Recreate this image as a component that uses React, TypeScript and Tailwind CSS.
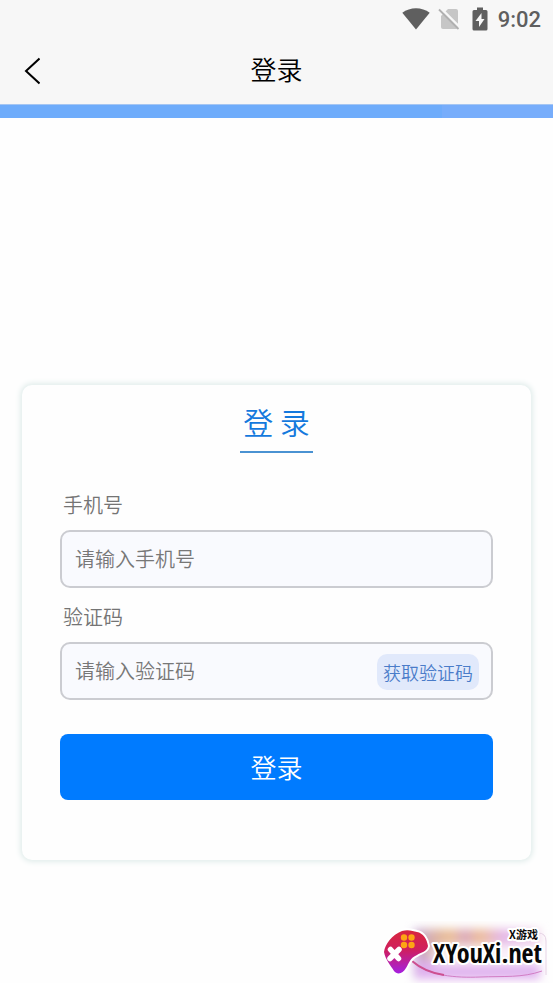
function StatusBar() {
  return (
    <div className="flex h-[38px] items-center justify-end pr-3 text-[#5f5f5f]">
      <svg className="h-[22px] w-7" viewBox="0 0 28 22" fill="currentColor">
        <path d="M14 21.5 L0.3 4.8 C8 -1.4 20 -1.4 27.7 4.8 Z" />
      </svg>
      <svg className="ml-2 h-[22px] w-[22px]" viewBox="0 0 22 22">
        <path d="M3 8 L10 1 H18 Q20 1 20 3 V19 Q20 21 18 21 H5 Q3 21 3 19 Z" fill="#c6c6c6" />
        <path d="M2 -0.5 L23.5 21" stroke="#f7f7f7" strokeWidth="2.5" />
        <path d="M1 1.5 L20.5 21" stroke="#b0b0b0" strokeWidth="1.8" />
      </svg>
      <svg className="ml-3 h-6 w-4" viewBox="0 0 16 24">
        <path
          d="M5 0.5 H11 V3 H14 Q15.5 3 15.5 4.5 V22 Q15.5 23.5 14 23.5 H2 Q0.5 23.5 0.5 22 V4.5 Q0.5 3 2 3 H5 Z"
          fill="currentColor"
        />
        <path d="M9.5 6 L3.5 14 H7 V20 L12.5 12 H9.5 Z" fill="#f7f7f7" />
      </svg>
      <span className="ml-[10px] pt-[2px] font-[Roboto] text-[22px] leading-6 font-medium">9:02</span>
    </div>
  )
}

function SiteBadge() {
  return (
    <div className="relative h-[62px] w-[173px]">
      <svg className="absolute inset-0 h-full w-full" viewBox="0 0 173 62">
        <defs>
          <filter id="soft" x="-20%" y="-40%" width="140%" height="180%">
            <feGaussianBlur stdDeviation="5" />
          </filter>
          <linearGradient id="haze" x1="0" y1="0" x2="1" y2="0">
            <stop offset="0" stopColor="#c3a6d8" />
            <stop offset="0.2" stopColor="#e0b49c" />
            <stop offset="0.3" stopColor="#ecc096" />
            <stop offset="0.4" stopColor="#d9a7c0" />
            <stop offset="0.52" stopColor="#edbd96" />
            <stop offset="0.7" stopColor="#e4b6e8" />
            <stop offset="1" stopColor="#f1d4ea" />
          </linearGradient>
          <linearGradient id="pad" x1="0" y1="0" x2="0" y2="1">
            <stop offset="0" stopColor="#d8273d" />
            <stop offset="0.45" stopColor="#cf1f5e" />
            <stop offset="1" stopColor="#a51fe0" />
          </linearGradient>
        </defs>
        <g filter="url(#soft)">
          <rect x="34" y="8" width="126" height="50" fill="url(#haze)" />
          <rect x="36" y="40" width="124" height="18" fill="#dfb0ee" />
          <rect x="52" y="24" width="112" height="20" rx="10" fill="#fff" fillOpacity="0.8" />
        </g>
        <path d="M32 40 C48 55 76 57 100 56 C124 55 142 57 162 50" fill="none" stroke="#d27cc4" />
        <path d="M32 40 C40 47 50 52 64 54" fill="none" stroke="#cd5090" strokeWidth="2" />
        <path d="M152 12 H158 Q166 12 166 20 V54" fill="none" stroke="#e6d3e5" />
        <path
          d="M22 10 C28 8 33 10 37 11 C43 12 47 18 48 25 C47 31 41 31 37 34 C30 37 29 42 26 47 C23 53 17 54 14 50 C11 45 5 38 4 31 C5 23 12 14 22 10 Z"
          fill="url(#pad)"
          stroke="#fff"
          strokeWidth="4"
          paintOrder="stroke"
          strokeLinejoin="round"
        />
        <path d="M10.5 28.5 L18.5 37.5 M19 28.5 L10 37.5" stroke="#fff" strokeWidth="5.5" strokeLinecap="round" />
        <g fill="#fda514">
          <circle cx="24" cy="16.5" r="3.2" />
          <circle cx="31.5" cy="16.5" r="3.2" />
          <circle cx="24" cy="24" r="3.2" />
          <circle cx="31.5" cy="24" r="3.2" />
        </g>
        <g fill="#080808" stroke="#fff" strokeWidth="4" strokeLinejoin="round" paintOrder="stroke">
          <text x="129" y="18" fontSize="11" fontWeight="700" fontFamily="'Noto Sans CJK SC', sans-serif">
            X游戏
          </text>
          <text
            x="53"
            y="42"
            fontSize="26"
            fontWeight="600"
            fontFamily="'Noto Sans Condensed', 'Open Sans Condensed', 'Liberation Sans Narrow', sans-serif"
          >
            XYouXi.net
          </text>
        </g>
      </svg>
    </div>
  )
}

export default function App() {
  return (
    <div className="flex min-h-screen flex-col bg-[#fefefe] font-['Noto_Sans_CJK_SC',sans-serif] font-[350]">
      <header className="bg-[#f7f7f7]">
        <StatusBar />
        <div className="grid h-[66px] grid-cols-[1fr_auto_1fr] items-center px-6 pb-1">
          <button type="button" aria-label="返回" className="w-10 pt-1 text-black">
            <svg className="h-7 w-4" viewBox="0 0 16 28" fill="none" stroke="currentColor" strokeWidth="2">
              <path d="M15.5 1.5 L2 14 L15.5 26.5" />
            </svg>
          </button>
          <h1 className="text-[26px] leading-9 text-black">登录</h1>
        </div>
      </header>
      <div className="flex h-[14px] border-t border-[#a5c6f3] bg-[#6eacfb]">
        <div className="ml-auto w-1/5 bg-[#77adfb]" />
      </div>

      <main className="px-[22px] pt-[267px]">
        <form className="flex flex-col rounded-[10px] bg-[#fefefe] px-[38px] pt-4 pb-[60px] shadow-[0_0_6px_1px_#d9e8e6]">
          <h2 className="self-center border-b-2 border-[#4a92d2] px-[3px] pb-[10px] text-[30px] leading-10 text-[#1479dd]">
            登 录
          </h2>

          <label htmlFor="phone" className="mt-[38px] pl-[3px] text-[20px] leading-7 text-[#747474]">
            手机号
          </label>
          <input
            id="phone"
            type="tel"
            placeholder="请输入手机号"
            className="mt-[11px] h-[58px] w-full rounded-[10px] border-2 border-[#cbccd1] bg-[#f9fafe] px-[13px] pb-[2px] text-[20px] outline-none placeholder:text-[#777777]"
          />

          <label htmlFor="code" className="mt-[15px] pl-[3px] text-[20px] leading-7 text-[#747474]">
            验证码
          </label>
          <div className="mt-[11px] flex h-[58px] items-center rounded-[10px] border-2 border-[#cbccd1] bg-[#f9fafe] pr-3 pl-[13px]">
            <input
              id="code"
              type="text"
              placeholder="请输入验证码"
              className="min-w-0 flex-1 bg-transparent text-[20px] outline-none placeholder:text-[#777777]"
            />
            <button type="button" className="mt-[2px] h-9 rounded-[10px] bg-[#e1e9fb] px-[6px] text-[18px] leading-6 text-[#4a7cc9]">
              获取验证码
            </button>
          </div>

          <button type="submit" className="mt-[34px] h-[66px] rounded-lg bg-[#007bff] text-[26px] leading-9 text-white">
            登录
          </button>
        </form>
      </main>

      <footer className="mt-auto flex justify-end">
        <SiteBadge />
      </footer>
    </div>
  )
}
